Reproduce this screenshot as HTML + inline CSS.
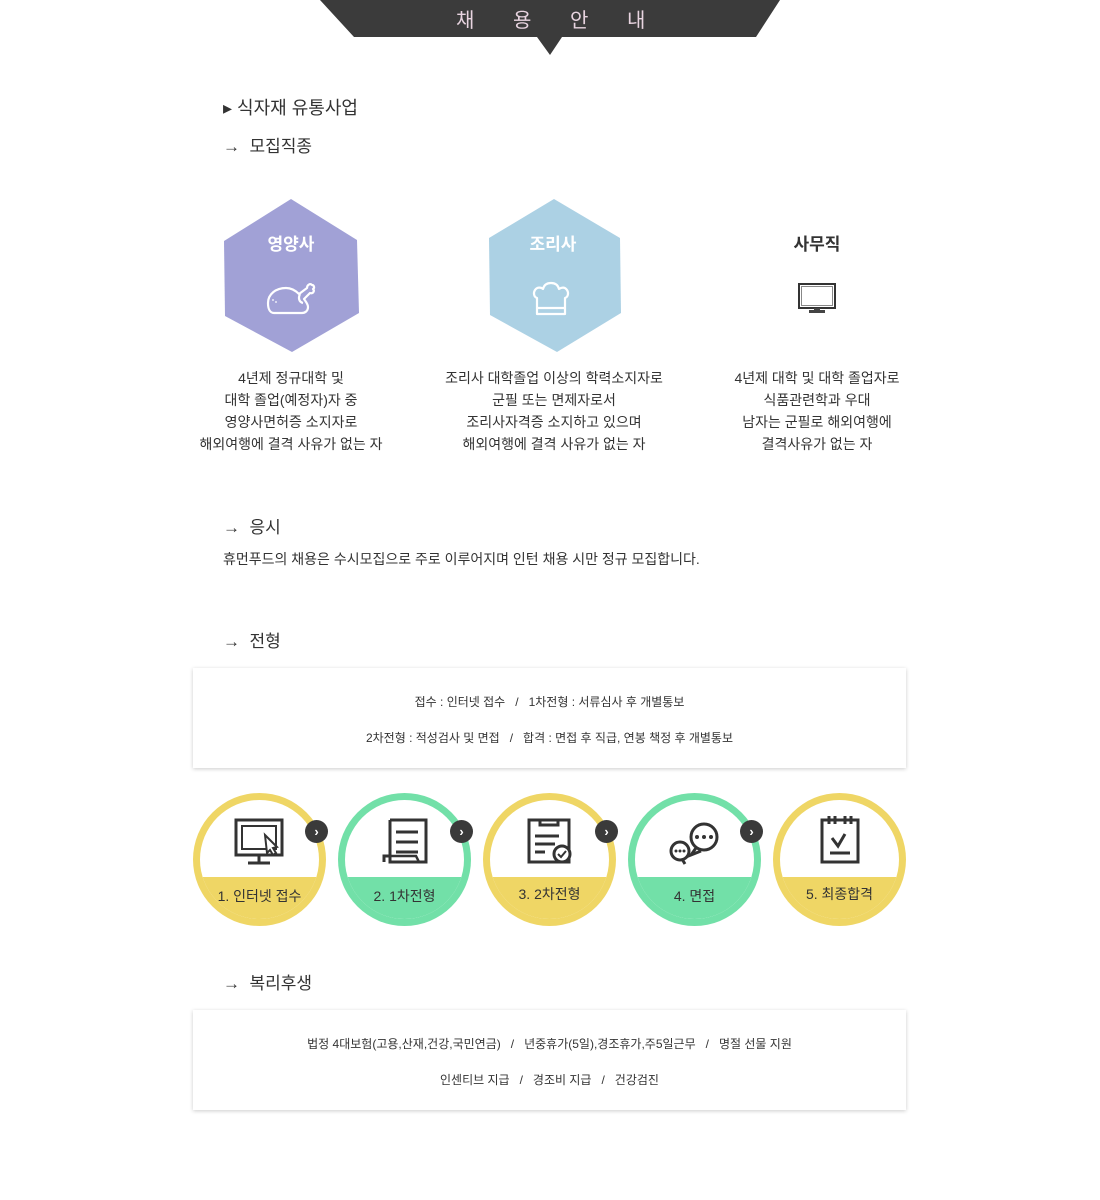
<!DOCTYPE html>
<html><head><meta charset="utf-8"><style>
*{margin:0;padding:0;box-sizing:border-box}
body{width:1100px;height:1200px;background:#fff;font-family:"Liberation Sans","Noto Sans CJK KR",sans-serif;color:#333;position:relative;overflow:hidden}
.a{position:absolute;white-space:nowrap}
.h{font-size:17px;color:#333}
.desc{font-size:14px;line-height:22px;text-align:center;color:#333}
.box{position:absolute;left:193px;width:713px;height:100px;background:#fff;box-shadow:0 1px 4px rgba(0,0,0,.2);text-align:center;font-size:12px;color:#333}
.c{position:absolute;top:793px;width:133px;height:133px;border-radius:50%;overflow:hidden}
.c .in{position:absolute;left:7px;top:7px;width:119px;height:119px;border-radius:50%;background:#fff;overflow:hidden}
.c .bt{position:absolute;left:0;right:0;top:77px;bottom:0}
.c .lab{position:absolute;left:0;right:0;top:86px;text-align:center;font-size:14px;color:#333}
.arr{position:absolute;top:820px;width:23px;height:23px;border-radius:50%;background:#3a3a3a;color:#fff;font-size:13px;text-align:center;line-height:23px;font-weight:bold}
</style></head><body>
<svg class="a" style="left:0;top:0" width="1100" height="60"><polygon points="320,0 780,0 756,37 562,37 550,55 537,37 354,37" fill="#3b3b3b"/></svg>
<div class="a" style="left:456px;top:4px;font-size:20px;color:#e8d4e0">채</div>
<div class="a" style="left:513px;top:4px;font-size:20px;color:#e8d4e0">용</div>
<div class="a" style="left:570px;top:4px;font-size:20px;color:#e8d4e0">안</div>
<div class="a" style="left:627px;top:4px;font-size:20px;color:#e8d4e0">내</div>

<div class="a" style="left:223px;top:94px;font-size:18px">▸ 식자재 유통사업</div>
<div class="a h" style="left:223px;top:132px">→&nbsp; 모집직종</div>

<svg class="a" style="left:0;top:0" width="1100" height="360">
<polygon points="291,199 357,240 359,313 292,352 225,316 224,241" fill="#a1a1d6"/>
<polygon points="554,199 620,238 621,313 557,352 490,315 489,238" fill="#acd1e4"/>
<g fill="none" stroke="#fff" stroke-width="2.2" stroke-linejoin="round">
<path d="M268,303c0-9 8-15 18-15 6 0 10 3 13 6l8-6c0-3 3-5 5-3 2 0 3 3 1 4 2 2 0 5-3 4l-6 6c2 3 4 5 4 8 0 4-3 6-6 6h-28c-4 0-6-4-6-10z"/>
<path d="M300,294c-2 4-1 8 3 9"/>
<path d="M537,298c-3-1-4-5-2-8 2-3 6-3 8-1 1-4 4-6 8-6s7 2 8 6c3-2 6-2 8 1 2 3 1 7-2 8v16h-28z"/><path d="M538,308h26"/>
</g>
<circle cx="273" cy="300" r="0.9" fill="#fff"/><circle cx="276" cy="302" r="0.9" fill="#fff"/>
<text x="291" y="250" font-size="17" font-weight="bold" fill="#fff" text-anchor="middle" font-family="Liberation Sans,Noto Sans CJK KR,sans-serif">영양사</text>
<text x="553" y="250" font-size="17" font-weight="bold" fill="#fff" text-anchor="middle" font-family="Liberation Sans,Noto Sans CJK KR,sans-serif">조리사</text>
<text x="817" y="250" font-size="17" font-weight="bold" fill="#333" text-anchor="middle" font-family="Liberation Sans,Noto Sans CJK KR,sans-serif">사무직</text>
<rect x="799" y="284" width="36" height="24" fill="none" stroke="#333" stroke-width="2"/><rect x="801.5" y="286.5" width="31" height="19" fill="none" stroke="#888" stroke-width="1"/><rect x="814" y="308" width="6" height="3" fill="#444"/><rect x="809" y="310" width="16" height="3" fill="#444"/>
</svg>

<div class="a desc" style="left:191px;width:200px;top:367px">4년제 정규대학 및<br>대학 졸업(예정자)자 중<br>영양사면허증 소지자로<br>해외여행에 결격 사유가 없는 자</div>
<div class="a desc" style="left:434px;width:240px;top:367px">조리사 대학졸업 이상의 학력소지자로<br>군필 또는 면제자로서<br>조리사자격증 소지하고 있으며<br>해외여행에 결격 사유가 없는 자</div>
<div class="a desc" style="left:717px;width:200px;top:367px">4년제 대학 및 대학 졸업자로<br>식품관련학과 우대<br>남자는 군필로 해외여행에<br>결격사유가 없는 자</div>

<div class="a h" style="left:223px;top:513px">→&nbsp; 응시</div>
<div class="a" style="left:223px;top:549px;font-size:14px">휴먼푸드의 채용은 수시모집으로 주로 이루어지며 인턴 채용 시만 정규 모집합니다.</div>
<div class="a h" style="left:223px;top:627px">→&nbsp; 전형</div>
<div class="box" style="top:668px"><div style="margin-top:25px">접수 : 인터넷 접수 &nbsp;&nbsp;/&nbsp;&nbsp; 1차전형 : 서류심사 후 개별통보</div><div style="margin-top:19px">2차전형 : 적성검사 및 면접 &nbsp;&nbsp;/&nbsp;&nbsp; 합격 : 면접 후 직급, 연봉 책정 후 개별통보</div></div>

<div class="c" style="left:193px;background:#efd665"><div class="in"><div class="bt" style="background:#efd665"></div><div class="lab">1. 인터넷 접수</div></div></div>
<div class="c" style="left:338px;background:#72e0a8"><div class="in"><div class="bt" style="background:#72e0a8"></div><div class="lab">2. 1차전형</div></div></div>
<div class="c" style="left:483px;background:#efd665"><div class="in"><div class="bt" style="background:#efd665"></div><div class="lab" style="top:84px">3. 2차전형</div></div></div>
<div class="c" style="left:628px;background:#72e0a8"><div class="in"><div class="bt" style="background:#72e0a8"></div><div class="lab">4. 면접</div></div></div>
<div class="c" style="left:773px;background:#efd665"><div class="in"><div class="bt" style="background:#efd665"></div><div class="lab" style="top:84px">5. 최종합격</div></div></div>
<div class="arr" style="left:305px">›</div><div class="arr" style="left:450px">›</div><div class="arr" style="left:595px">›</div><div class="arr" style="left:740px">›</div>
<svg class="a" style="left:0;top:0" width="1100" height="900"><g fill="none" stroke="#333" stroke-width="3">
<rect x="236" y="820" width="46" height="35"/><rect x="242" y="826" width="34" height="23" stroke-width="2"/><path d="M259,856v6M248,863h22"/><path d="M265,835l12,12-4,1 3,5-3,2-3-5-3 3z" fill="#fff" stroke-width="2"/>
<path d="M390,820h36v42h-36v-6h-6v6M390,820v40M396,832h22M396,842h22M396,852h22"/><path d="M384,856h32l3,6" stroke-width="2.5"/>
<rect x="529" y="820" width="40" height="42"/><path d="M540,820v5h18v-5M535,836h24M535,844h20M535,852h10"/><circle cx="562" cy="854" r="8" fill="#fff"/><path d="M558,854l3,3 5-6" stroke-width="2"/>
<circle cx="704" cy="837" r="13"/><path d="M696,848l-5,7 10-4"/><circle cx="680" cy="851" r="9"/><path d="M682,859l3,5"/>
<rect x="822" y="820" width="36" height="42"/><path d="M829,816v8M835,816v8M845,816v8M851,816v8M832,838l6,8 7-12M830,853h20"/>
</g><g fill="#333"><circle cx="697" cy="837" r="2"/><circle cx="704" cy="837" r="2"/><circle cx="711" cy="837" r="2"/><circle cx="676" cy="851" r="1.5"/><circle cx="680" cy="851" r="1.5"/><circle cx="684" cy="851" r="1.5"/></g></svg>

<div class="a h" style="left:223px;top:969px">→&nbsp; 복리후생</div>
<div class="box" style="top:1010px"><div style="margin-top:25px">법정 4대보험(고용,산재,건강,국민연금) &nbsp;&nbsp;/&nbsp;&nbsp; 년중휴가(5일),경조휴가,주5일근무 &nbsp;&nbsp;/&nbsp;&nbsp; 명절 선물 지원</div><div style="margin-top:19px">인센티브 지급 &nbsp;&nbsp;/&nbsp;&nbsp; 경조비 지급 &nbsp;&nbsp;/&nbsp;&nbsp; 건강검진</div></div>
</body></html>
